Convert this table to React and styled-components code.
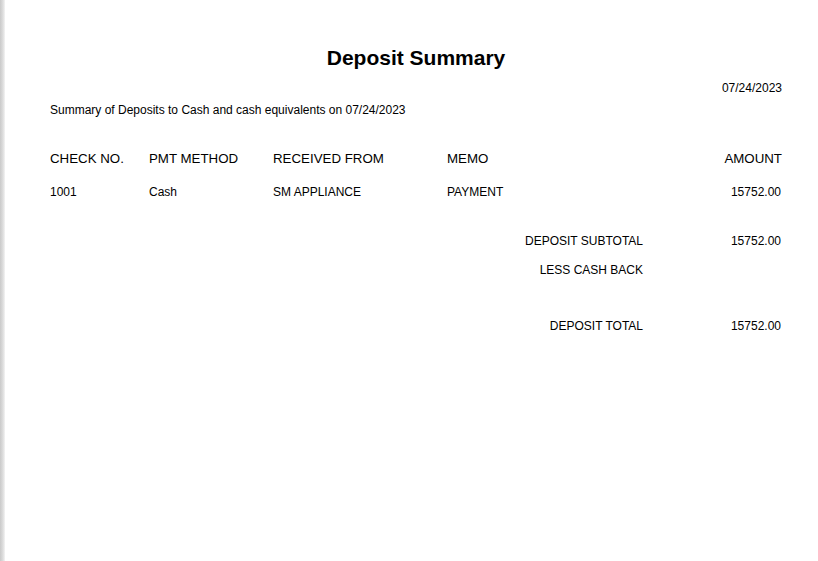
import React from "react";
import styled, { createGlobalStyle } from "styled-components";

const Global = createGlobalStyle`
  html, body { margin: 0; padding: 0; background: #fff; }
  body { font-family: "Liberation Sans", Arial, sans-serif; color: #000; }
`;

const Frame = styled.div`
  display: flex;
  min-height: 100vh;
`;

const Edge = styled.div`
  width: 5px;
  flex: none;
  background: linear-gradient(to right, #c9c9c9, #dedede 60%, #f4f4f4);
`;

const Page = styled.div`
  flex: 1;
  display: flex;
  flex-direction: column;
  padding: 46px 36px 0 45px;
`;

const Title = styled.h1`
  margin: 0;
  font-size: 21px;
  line-height: 24px;
  font-weight: 700;
  text-align: center;
`;

const DateLine = styled.div`
  margin-top: 11px;
  font-size: 12px;
  line-height: 14px;
  text-align: right;
`;

const Summary = styled.div`
  margin-top: 8px;
  font-size: 12px;
  line-height: 14px;
`;

const Grid = styled.div`
  display: grid;
  grid-template-columns: 99px 124px 174px 1fr auto;
  margin-top: ${(p) => p.$top}px;
  font-size: ${(p) => p.$size}px;
  line-height: ${(p) => p.$lh}px;
`;

const Amount = styled.div`
  text-align: right;
  padding-right: ${(p) => p.$pad || 0}px;
`;

const TotalRow = styled.div`
  display: flex;
  justify-content: flex-end;
  margin-top: ${(p) => p.$top}px;
  font-size: 12px;
  line-height: 14px;
`;

const TotalLabel = styled.div`
  text-align: right;
`;

const TotalValue = styled.div`
  width: 139px;
  padding-right: 1px;
  box-sizing: border-box;
  text-align: right;
`;

const totals = [
  { label: "DEPOSIT SUBTOTAL", value: "15752.00", top: 35 },
  { label: "LESS CASH BACK", value: "", top: 15 },
  { label: "DEPOSIT TOTAL", value: "15752.00", top: 42 },
];

export default function App() {
  return (
    <>
      <Global />
      <Frame>
        <Edge />
        <Page>
          <Title>Deposit Summary</Title>
          <DateLine>07/24/2023</DateLine>
          <Summary>Summary of Deposits to Cash and cash equivalents on 07/24/2023</Summary>
          <Grid $top={34} $size={13.3} $lh={16}>
            <div>CHECK NO.</div>
            <div>PMT METHOD</div>
            <div>RECEIVED FROM</div>
            <div>MEMO</div>
            <Amount>AMOUNT</Amount>
          </Grid>
          <Grid $top={18} $size={12} $lh={14}>
            <div>1001</div>
            <div>Cash</div>
            <div>SM APPLIANCE</div>
            <div>PAYMENT</div>
            <Amount $pad={1}>15752.00</Amount>
          </Grid>
          {totals.map((t) => (
            <TotalRow key={t.label} $top={t.top}>
              <TotalLabel>{t.label}</TotalLabel>
              <TotalValue>{t.value}</TotalValue>
            </TotalRow>
          ))}
        </Page>
      </Frame>
    </>
  );
}
